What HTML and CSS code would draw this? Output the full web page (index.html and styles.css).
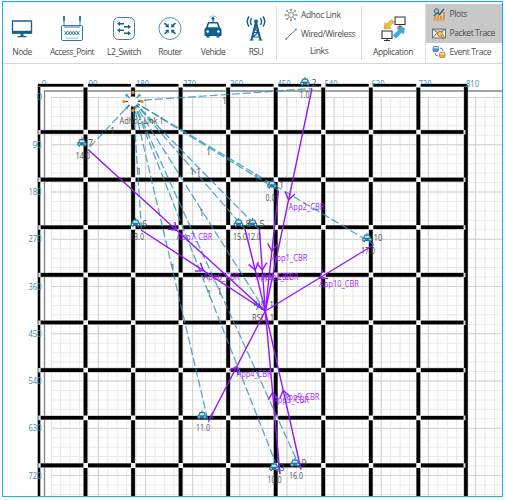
FILE: index.html
```html
<!DOCTYPE html>
<html lang="en">
<head>
<meta charset="utf-8">
<title>Network Simulation</title>
<link rel="stylesheet" href="styles.css">
</head>
<body>
<div class="window">
  <header class="toolbar">
    <div class="tool node">
      <svg width="22" height="28" viewBox="0 0 22 28"><path d="M1.500 7h19v12h-19z" fill="#fff" stroke="#17608a" stroke-width="1.300"/><path d="M1 16.800h20v2.700H1z" fill="#17608a"/><path d="M9.500 19.500h3v2.500h3v1.300h-9V22h3z" fill="#17608a"/></svg>
      <span>Node</span>
    </div>
    <div class="tool access">
      <svg width="26" height="28" viewBox="0 0 26 28" fill="none" stroke="#3279a5" stroke-width="1"><rect x="2.500" y="11.500" width="21" height="15" rx="1.500"/><path d="M5 11V3M21 11V3M5 13h16" /><path d="M5 2v5M21 2v5" stroke-width="2"/><path d="M5.500 17l3 4 3-4 3 4 3-4 3 4M5.500 21l3-4 3 4 3-4 3 4 3-4" stroke-width=".9"/><path d="M7 24.200h12" stroke-width=".5"/></svg>
      <span>Access_Point</span>
    </div>
    <div class="tool switch">
      <svg width="24" height="28" viewBox="0 0 24 28"><rect x="1.500" y="3.500" width="21" height="22" rx="5" fill="#fff" stroke="#3d80a8"/><path d="M5 9.700l3-2.200v1.500h4v1.400H8v1.500zM19 12.800l-3-2.200v1.500h-4v1.400h4v1.500zM5 16.200l3-2.200v1.500h4v1.400H8v1.500zM19 19.300l-3-2.200v1.500h-4V20h4v1.500z" fill="#12638f"/></svg>
      <span>L2_Switch</span>
    </div>
    <div class="tool router">
      <svg width="24" height="28" viewBox="0 0 24 28"><circle cx="12" cy="14.500" r="11" fill="#fff" stroke="#5592b5"/><g fill="#12638f"><path id="ra" d="M6 9.500l1-1 2.500 2.300 1-1.200.4 3.800-3.900-.3 1.200-1z"/><use href="#ra" transform="rotate(90 12 14.500)"/><use href="#ra" transform="rotate(180 12 14.500)"/><use href="#ra" transform="rotate(270 12 14.500)"/></g></svg>
      <span>Router</span>
    </div>
    <div class="tool vehicle">
      <svg width="20" height="28" viewBox="0 0 20 28"><g fill="#0d5f8f"><path d="M5 8h10l2 5.500 1.500 1.500v7h-2v1.500h-3V22h-7v1.500h-3V22h-2v-7L3 13.500z"/><path d="M9.500 4h1.200v4H9.500z"/><circle cx="10" cy="4.500" r="1.500"/></g><path d="M6 9.500h8l1.200 3.800H4.800z" fill="#fff"/><circle cx="4.700" cy="17.500" r="1.300" fill="#fff"/><circle cx="15.300" cy="17.500" r="1.300" fill="#fff"/><path d="M6.500 4q0-2 3.500-2t3.500 2" fill="none" stroke="#6ca2bf" stroke-width=".7"/></svg>
      <span>Vehicle</span>
    </div>
    <div class="tool rsu">
      <svg width="22" height="28" viewBox="0 0 22 28" fill="none" stroke="#0d5f8f"><circle cx="11" cy="7.500" r="2" fill="#0d5f8f" stroke="none"/><path d="M11 8L6.500 26M11 8l4.500 18" stroke-width="2"/><path d="M9.500 14h3M8.500 18.500h5M7 23h8M9 14l4.500 4.500L7.500 23M4.500 26h4M13.500 26h4" stroke-width="1.200"/><path d="M6.500 4q-2 3.500 0 7M15.500 4q2 3.500 0 7M4 2.500q-3.500 5 0 10M18 2.500q3.500 5 0 10" stroke-width="1.400"/></svg>
      <span>RSU</span>
    </div>
    <div class="links">
      <div class="row"><svg width="14" height="14" viewBox="0 0 14 14"><circle cx="7" cy="7" r="2.500" fill="#fff" stroke="#777" stroke-width=".8"/><path d="M7 4V2M7 10v2M4 7H2M10 7h2M5 5L3.500 3.500M9 5l1.500-1.500M5 9l-1.500 1.500M9 9l1.500 1.500" stroke="#777" stroke-width=".8"/><g fill="#da8a36"><circle cx="7" cy="1.500" r="1.100"/><circle cx="7" cy="12.500" r="1.100"/><circle cx="1.500" cy="7" r="1.100"/><circle cx="12.500" cy="7" r="1.100"/></g><g fill="#5798b8"><circle cx="3" cy="3" r="1"/><circle cx="11" cy="3" r="1"/><circle cx="3" cy="11" r="1"/><circle cx="11" cy="11" r="1"/></g></svg><span>Adhoc Link</span></div>
      <div class="row"><svg width="14" height="14" viewBox="0 0 14 14"><path d="M2 12L12 2.500" stroke="#666" stroke-width="1"/><circle cx="2" cy="12" r="1" fill="#b68b50"/><circle cx="12" cy="2.500" r="1" fill="#5798b8"/></svg><span>Wired/Wireless</span></div>
      <span class="caption">Links</span>
    </div>
    <div class="application">
      <svg width="28" height="28" viewBox="0 0 28 28"><path d="M16 3h10v7.500H16zM3 17h10v7.500H3z" fill="#fff" stroke="#333" stroke-width="1.100"/><path d="M21 11v2M18.500 13h5M8 25v1.500M5 26.500h6" stroke="#333"/><path d="M5 14.500l1-6 1.700 1.700L12.500 5.500l2.700 2.500-5 4.800 1.700 1.700z" fill="#f5bd35" stroke="#a87c28" stroke-width=".5"/><path d="M25.500 14l-1 6-1.800-1.700-5.700 6-3-2.800 5.800-5.700-1.700-1.700z" fill="#3baee5" stroke="#2c84ad" stroke-width=".5"/></svg>
      <span>Application</span>
    </div>
    <div class="results">
      <div class="result on"><svg width="14" height="14" viewBox="0 0 14 14"><path d="M2 12V9h2v3zM5 12V8h2v4zM8 12V9h2v3zM11 12V5h2v7z" fill="#e99431"/><path d="M1 13h12" stroke="#e99431"/><path d="M2 9l3.500-3.500 2 2L12 2" fill="none" stroke="#245b7c" stroke-width="1.300"/><circle cx="4.500" cy="4" r="2.300" fill="#a9bdc9" stroke="#355" stroke-width=".8"/></svg><span>Plots</span></div>
      <div class="result on"><svg width="14" height="14" viewBox="0 0 14 14"><path d="M.5 3h13v9H.5zM.5 3L7 8l6.500-5M.5 12L5 7M13.500 12L9 7" fill="#eee" stroke="#555" stroke-width=".8"/><circle cx="8" cy="8" r="2.600" fill="#f2c45a" stroke="#8b6c2d" stroke-width=".7"/><path d="M9.500 10.500l2 2.500" stroke="#b77b25" stroke-width="1.300"/></svg><span>Packet Trace</span></div>
      <div class="result"><svg width="14" height="14" viewBox="0 0 14 14"><rect x="1" y="1.500" width="5.500" height="5" rx="1" fill="#4b91d0" stroke="#28649b" stroke-width=".6"/><path d="M1.500 2h4.500v1.500h-4.500z" fill="#c4def1"/><rect x="7.500" y="7.500" width="5.500" height="5" rx="1" fill="#efa52d" stroke="#a56c20" stroke-width=".6"/><path d="M8 8h4.500v1.500H8z" fill="#fae2b3"/><path d="M8 3q3 0 3 3M3 8q0 3 3 3" fill="none" stroke="#555" stroke-width=".7"/></svg><span>Event Trace</span></div>
    </div>
  </header>
  <main class="canvas">
    <svg width="499" height="432" viewBox="3 64 499 432">
      <defs>
        <marker id="head" viewBox="-10 -8 12 16" markerUnits="userSpaceOnUse" markerWidth="12" markerHeight="16" refX="0" refY="0" orient="auto"><path d="M-7 -5L0 0L-7 5" fill="none" stroke="#9415fb" stroke-width="1.400"/></marker>
        <g id="car"><path d="M-2.500 -3.500h5l1.300 3L4.800 .5v2.500H3.500V4h-1.500V3h-4v1h-1.500V3H-4.800V.5l1-1z" fill="#2079a5"/><path d="M-1.800 -2.300h3.600l.8 2h-5.200z" fill="#d6e9f1"/><path d="M0 -5v2" stroke="#2079a5"/><circle cx="-3" cy="1.500" r=".7" fill="#fff"/><circle cx="3" cy="1.500" r=".7" fill="#fff"/></g>
      </defs>

      <!-- metric grid -->
      <g class="fine">
        <path class="minor-x" d="M51.200 297H502"/>
        <path class="minor-y" d="M277 97V496"/>
        <path class="major-x" d="M51.200 297H502"/>
        <path class="major-y" d="M277 97V496"/>
      </g>
      <path class="axis" d="M44.500 496V91H502"/>

      <!-- road blocks -->
      <g class="roads">
        <path class="edge-x" d="M83.200 290.500H468.500"/>
        <path class="edge-y" d="M252 129.700V468.500"/>
        <path class="road-x" d="M83.700 290.500H468.500"/>
        <path class="road-y" d="M252 130.200V468.500"/>
        <path class="left" d="M39 85V496"/>
        <path class="halo" d="M38 85H467"/>
        <path class="top" d="M38 85.200H467"/>
      </g>
      <g class="joints">
        <path d="M83.400 85H460M83.400 132.200H460M83.400 179.700H460M83.400 227.300H460M83.400 275H460M83.400 322.600H460M83.400 370.200H460M83.400 417.800H460M83.400 465.500H460"/>
      </g>
      <path class="ends-left" d="M39.500 129.900V468"/>
      <path class="ends-right" d="M464.500 129.900V468"/>

      <g class="scale">
        <text x="41.500" y="86.500">0</text><text x="88.500" y="86.500" textLength="9" lengthAdjust="spacingAndGlyphs">90</text><text x="136" y="86.500" textLength="13" lengthAdjust="spacingAndGlyphs">180</text><text x="183" y="86.500" textLength="13" lengthAdjust="spacingAndGlyphs">270</text><text x="230" y="86.500" textLength="13" lengthAdjust="spacingAndGlyphs">360</text><text x="277.500" y="86.500" textLength="13" lengthAdjust="spacingAndGlyphs">450</text><text x="324.500" y="86.500" textLength="13" lengthAdjust="spacingAndGlyphs">540</text><text x="371.500" y="86.500" textLength="13" lengthAdjust="spacingAndGlyphs">630</text><text x="418.500" y="86.500" textLength="13" lengthAdjust="spacingAndGlyphs">720</text><text x="466" y="86.500" textLength="13" lengthAdjust="spacingAndGlyphs">810</text>
        <text x="37" y="100">0</text><text x="32.500" y="147.500" textLength="9" lengthAdjust="spacingAndGlyphs">90</text><text x="28.500" y="194.500" textLength="13" lengthAdjust="spacingAndGlyphs">180</text><text x="28.500" y="242" textLength="13" lengthAdjust="spacingAndGlyphs">270</text><text x="28.500" y="289.500" textLength="13" lengthAdjust="spacingAndGlyphs">360</text><text x="28.500" y="336.500" textLength="13" lengthAdjust="spacingAndGlyphs">450</text><text x="28.500" y="384" textLength="13" lengthAdjust="spacingAndGlyphs">540</text><text x="28.500" y="431" textLength="13" lengthAdjust="spacingAndGlyphs">630</text><text x="28.500" y="478.500" textLength="13" lengthAdjust="spacingAndGlyphs">720</text>
      </g>
      <path class="over" d="M41 85.200H81.500M90 85.200H129M137 85.200H176.500M184.500 85.200H224M232 85.200H271.500M279.500 85.200H319M327 85.200H366.500M374.500 85.200H414M422 85.200H466"/>

      <g class="label">
        <text x="110" y="133.500">1</text><text x="136.500" y="174.500">1</text><text x="222" y="104">1</text><text x="206" y="155">1</text><text x="253.500" y="180.500">1</text><text x="189.500" y="174.500">1</text><text x="196" y="174.500">1</text><text x="199" y="215.500">1</text><text x="170" y="270.500">1</text><text x="206.500" y="296.500">1</text><text x="217" y="295">1</text>
      </g>

      <g class="wireless">
        <path d="M133 101L88 149"/><path d="M133 101L312 88.500"/><path d="M133 101L278.500 190.500"/><path d="M133 101L141.500 230"/><path d="M133 101L245 229"/><path d="M133 101L259 229"/><path d="M133 101L374 244.500"/><path d="M133 101L265 311"/><path d="M133 101L208 421"/><path d="M133 101L280 474"/><path d="M133 101L301 469.500"/>
      </g>

      <g class="device">
        <use href="#car" x="82" y="142.500"/><use href="#car" x="305" y="82"/><use href="#car" x="272" y="184.500"/><use href="#car" x="135.500" y="223"/><use href="#car" x="238.500" y="223"/><use href="#car" x="252.500" y="223"/><use href="#car" x="367" y="238"/><use href="#car" x="202" y="415.500"/><use href="#car" x="274" y="467"/><use href="#car" x="295" y="463"/>
        <path d="M259 303l-2.500 7M259 303l2.500 7M257.500 307h3M256.500 301q-1.500 2 0 4M261.500 301q1.500 2 0 4M254.800 300q-2 3 0 6M263.200 300q2 3 0 6" fill="none" stroke="#17719f"/>
      </g>

      <g class="label">
        <text x="88" y="145.500">7</text><text x="75.500" y="158.500" textLength="14.500" lengthAdjust="spacingAndGlyphs">14.0</text>
        <text x="311.500" y="85.500">2</text><text x="299.500" y="98" textLength="10" lengthAdjust="spacingAndGlyphs">1.0</text>
        <text x="279" y="187.500">1</text><text x="265.500" y="200.500" textLength="10" lengthAdjust="spacingAndGlyphs">0.0</text>
        <text x="142" y="226.500">6</text><text x="130" y="239.500" textLength="14" lengthAdjust="spacingAndGlyphs">13.0</text>
        <text x="245.500" y="226.500">8</text><text x="233" y="239.500" textLength="14" lengthAdjust="spacingAndGlyphs">15.0</text>
        <text x="259.500" y="226.500">5</text><text x="247" y="239.500" textLength="14" lengthAdjust="spacingAndGlyphs">12.0</text>
        <text x="373.500" y="240.500" textLength="9" lengthAdjust="spacingAndGlyphs">10</text><text x="361" y="253.500" textLength="14" lengthAdjust="spacingAndGlyphs">17.0</text>
        <text x="269" y="307.500">1</text><text x="252" y="321" textLength="22" lengthAdjust="spacingAndGlyphs">RSU_1</text>
        <text x="209" y="418.500">4</text><text x="196" y="431" textLength="14" lengthAdjust="spacingAndGlyphs">11.0</text>
        <text x="279.500" y="470.500">3</text><text x="267.500" y="483" textLength="14" lengthAdjust="spacingAndGlyphs">10.0</text>
        <text x="301.500" y="466">9</text><text x="289" y="478.500" textLength="14" lengthAdjust="spacingAndGlyphs">16.0</text>
        <text x="119.500" y="123.500" textLength="44" lengthAdjust="spacingAndGlyphs">Adhoc Link 1</text>
      </g>

      <g class="traffic">
        <path d="M88 149.500L176.600 230.300L265.300 311"/>
        <path d="M312 88.500L288.600 199.800L265.300 311"/>
        <path d="M278.500 190.500L271.900 251L265.300 311"/>
        <path d="M141 230L203.500 270.700L265.300 311"/>
        <path d="M245 229L255.200 270L265.300 311"/>
        <path d="M259.300 229L262.300 270L265.300 311"/>
        <path d="M373.500 245L319.500 278L265.300 311"/>
        <path d="M208.300 421.700L236.800 366.500L265.300 311"/>
        <path d="M280 474L272.600 392.500L265.300 311"/>
        <path d="M301 469.500L283.200 390.300L265.300 311"/>
      </g>
      <g class="flow">
        <text x="176.500" y="239.500" textLength="36" lengthAdjust="spacingAndGlyphs">App7_CBR</text><text x="288.500" y="209.500" textLength="36" lengthAdjust="spacingAndGlyphs">App2_CBR</text><text x="271.500" y="260.500" textLength="36" lengthAdjust="spacingAndGlyphs">App1_CBR</text><text x="203.500" y="280" textLength="36" lengthAdjust="spacingAndGlyphs">App6_CBR</text><text x="255.500" y="279.500" textLength="36" lengthAdjust="spacingAndGlyphs">App8_CBR</text><text x="262.500" y="279.500" textLength="36" lengthAdjust="spacingAndGlyphs">App5_CBR</text><text x="319" y="287" textLength="40" lengthAdjust="spacingAndGlyphs">App10_CBR</text><text x="236.500" y="376.500" textLength="35" lengthAdjust="spacingAndGlyphs">App4_CBR</text><text x="273" y="402.500" textLength="36" lengthAdjust="spacingAndGlyphs">App3_CBR</text><text x="283.500" y="399.500" textLength="36" lengthAdjust="spacingAndGlyphs">App9_CBR</text>
      </g>

      <!-- ad hoc hub -->
      <g transform="translate(133 101.500)">
        <path d="M0 -9V9M-9 0H9M-6 -6L6 6M6 -6L-6 6" stroke="#222" stroke-width=".9"/>
        <circle r="4.800" fill="#fff" stroke="#ddd" stroke-width=".5"/>
        <g fill="#ef8d13"><circle cy="-9" r="1.700"/><circle cy="9" r="1.700"/><circle cx="-9" r="1.700"/><circle cx="9" r="1.700"/></g>
        <g fill="#4ca4c8"><circle cx="-6.300" cy="-6.300" r="1.500"/><circle cx="6.300" cy="-6.300" r="1.500"/><circle cx="-6.300" cy="6.300" r="1.500"/></g>
      </g>
    </svg>
  </main>
</div>
</body>
</html>
```
FILE: styles.css
```css
* { box-sizing: border-box; }
body {
  margin: 0;
  background: #fff;
  font-family: "Open Sans", "Noto Sans", sans-serif;
  font-size: 8.5px;
  color: #4c4c4c;
}
.window {
  width: 501px;
  height: 496px;
  margin: 1px 2px 0;
  border: 1px solid #16b3e6;
  overflow: hidden;
}
.toolbar {
  display: flex;
  height: 62px;
  padding-top: 1px;
  border-top: 1px solid #eee;
  border-bottom: 1px solid #d4d4d4;
}
.toolbar svg { display: block; flex: none; }
.toolbar span { line-height: 12px; white-space: nowrap; letter-spacing: -0.4px; }
.tool, .application {
  display: flex;
  flex-direction: column;
  align-items: center;
  padding-top: 10px;
  gap: 4px;
  flex: none;
}
.toolbar .tool span { letter-spacing: -0.55px; }
.node { width: 38px; }
.access { width: 62px; }
.switch { width: 42px; }
.router { width: 50px; }
.vehicle { width: 36px; }
.rsu { width: 45px; padding-left: 5px; }
.links {
  width: 86px;
  height: 54px;
  margin-top: 2px;
  padding-left: 7px;
  border-left: 1px solid #ddd;
  border-right: 1px solid #ddd;
}
.row { display: flex; align-items: center; height: 19px; gap: 3px; }
.row:first-child { height: 18px; }
.links .caption { display: block; margin: 2px 0 0 26px; }
.application { width: 63px; }
.results { width: 78px; border-left: 1px solid #ddd; }
.result { display: flex; align-items: center; height: 19px; padding-left: 6px; gap: 4px; }
.result.on { background: #c8c8c8; }
.result.on + .result.on { height: 20px; }
.result:last-child { height: 17px; }

.canvas { height: 432px; }
.canvas svg { display: block; }
.fine path { fill: none; }
.minor-x { stroke: #e9e9e9; stroke-width: 400; stroke-dasharray: 1 8.43; stroke-dashoffset: 0.5; }
.minor-y { stroke: #e9e9e9; stroke-width: 452; stroke-dasharray: 1 8.45; }
.major-x { stroke: #d2d2d2; stroke-width: 400; stroke-dasharray: 1 46.15; stroke-dashoffset: 0.5; }
.major-y { stroke: #d2d2d2; stroke-width: 452; stroke-dasharray: 1 46.25; }
.axis { fill: none; stroke: #858585; stroke-width: 1.3; }
.scale text { font-size: 9px; fill: #2d8db8; }
.roads path { fill: none; stroke: #000; }
.roads .road-x { stroke-width: 411; stroke-dasharray: 3.6 43.95; }
.roads .road-y { stroke-width: 426; stroke-dasharray: 3.6 44.02; }
.roads .edge-x { stroke: #aaa; stroke-width: 411; stroke-dasharray: 4.6 42.95; }
.roads .edge-y { stroke: #aaa; stroke-width: 426; stroke-dasharray: 4.6 43.02; }
.roads .left { stroke-width: 2.6; }
.roads .halo { stroke: #ddd; stroke-width: 4; }
.roads .top { stroke-width: 2.4; }
.over { fill: none; stroke: #000; stroke-width: 2.2; }
.joints path { fill: none; stroke: #fafafa; stroke-width: 4.8; stroke-dasharray: 4.6 42.95; }
.ends-left { fill: none; stroke: #ddd; stroke-width: 2.4; stroke-dasharray: 4.6 43.02; }
.ends-right { fill: none; stroke: #ddd; stroke-width: 2; stroke-dasharray: 4.6 43.02; }
.wireless path { fill: none; stroke: #2b93bd; stroke-opacity: .8; stroke-width: 1.3; stroke-dasharray: 8 3; }
.traffic path { fill: none; stroke: #9415fb; stroke-width: 1.4; marker-mid: url(#head); }
.label text { font-size: 9px; fill: #4c4c4c; }
.flow text { font-size: 9px; fill: #a02bf8; }
```
